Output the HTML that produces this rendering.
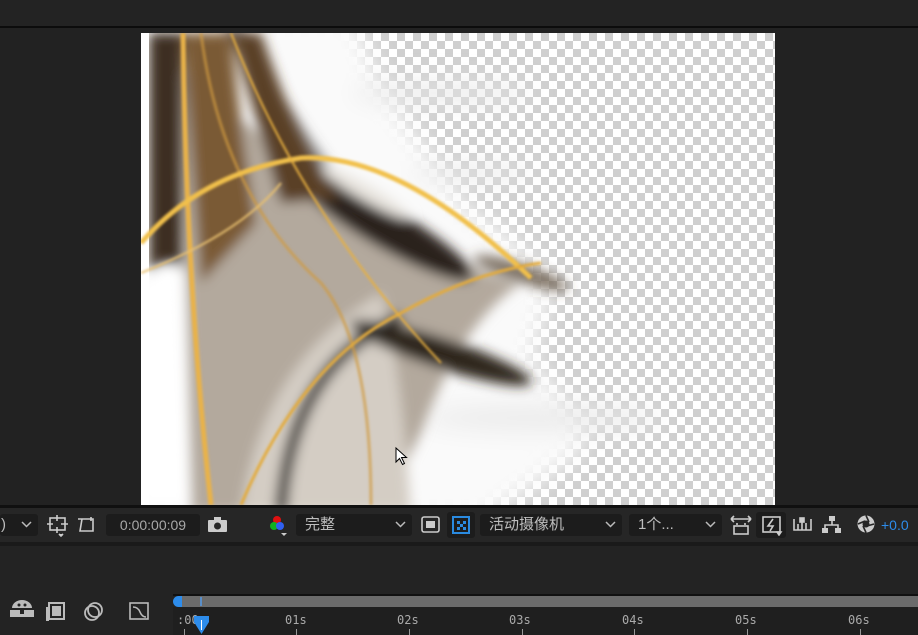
<!DOCTYPE html>
<html><head><meta charset="utf-8"><style>
body{margin:0;width:918px;height:635px;background:#222;overflow:hidden;position:relative;font-family:"Liberation Sans","Noto Sans CJK SC",sans-serif;}
.a{position:absolute}
.dd{position:absolute;background:#1c1c1c;border-radius:3px;height:22px;top:514px;color:#bdbdbd;font-size:15px;line-height:22px}
.ch{position:absolute;right:6px;top:7px}
.tk{position:absolute;color:#aaa;font-size:12px;font-family:"DejaVu Sans Mono","Liberation Mono",monospace;top:613px}
.tick{position:absolute;width:1px;height:6px;background:#999;top:629px}
</style></head><body>
<div class="a" style="left:0;top:0;width:918px;height:26px;background:#232323"></div>
<div class="a" style="left:0;top:26px;width:918px;height:2px;background:#0c0c0c"></div>

<svg class="a" style="left:141px;top:33px" width="634" height="472" viewBox="0 0 634 472">
<defs>
<pattern id="ck" width="16" height="16" patternUnits="userSpaceOnUse">
<rect width="16" height="16" fill="#fff"/><rect width="8" height="8" fill="#cfcfcf"/><rect x="8" y="8" width="8" height="8" fill="#cfcfcf"/></pattern>
<filter id="b1" x="-50%" y="-50%" width="200%" height="200%"><feGaussianBlur stdDeviation="12"/></filter>
<filter id="b2" x="-50%" y="-50%" width="200%" height="200%"><feGaussianBlur stdDeviation="6"/></filter>
<filter id="b3"><feGaussianBlur stdDeviation="1.2"/></filter>
</defs>
<rect width="634" height="472" fill="url(#ck)"/>
<g filter="url(#b1)">
<path d="M-20 -20 L215 -20 Q235 60 290 120 L320 170 Q400 220 410 260 L390 330 Q450 380 440 420 L340 490 L-20 490Z" fill="#fafafa"/>
<ellipse cx="300" cy="60" rx="90" ry="12" fill="#e6e6e6" opacity=".7"/>
<ellipse cx="400" cy="385" rx="120" ry="14" fill="#e8e8e8" opacity=".8"/>
<ellipse cx="330" cy="140" rx="60" ry="10" fill="#e6e6e6" opacity=".7"/>
</g>
<g filter="url(#b2)">
<path d="M40 40 Q140 120 250 190 Q330 240 380 250 Q320 290 280 400 L240 480 L50 480Z" fill="#b3a99d"/>
<path d="M100 480 Q120 330 240 260 Q260 330 270 480Z" fill="#d4cdc4"/>
<path d="M90 -10 Q150 100 200 160 L260 200 L300 230" stroke="#555" stroke-width="18" fill="none" opacity=".6"/>
<ellipse cx="245" cy="195" rx="100" ry="20" transform="rotate(30 245 195)" fill="#2a241e"/>
<ellipse cx="225" cy="160" rx="50" ry="8" transform="rotate(30 225 160)" fill="#e8e4de"/>
<ellipse cx="300" cy="320" rx="95" ry="15" transform="rotate(18 300 320)" fill="#2e261c"/>
<ellipse cx="380" cy="240" rx="50" ry="9" transform="rotate(18 380 240)" fill="#5a4a38" opacity=".8"/>
<path d="M140 480 Q150 330 260 285" stroke="#2a2520" stroke-width="12" fill="none"/>
<path d="M8 0 L42 0 L42 240 Q25 220 8 240Z" fill="#3c2e22"/>
<path d="M42 0 L90 0 Q100 100 115 190 L60 250Z" fill="#7a5a36"/>
<path d="M90 0 L120 0 Q160 120 200 165 L140 170Z" fill="#5a4028"/>
<path d="M0 250 L40 230 L50 472 L0 472Z" fill="#fff"/>
</g>
<rect x="0" y="0" width="8" height="472" fill="#fff"/>
<g fill="none" filter="url(#b3)">
<path d="M42 0 Q45 250 70 472" stroke="#e9b24a" stroke-width="5"/>
<path d="M60 0 Q80 160 180 250 Q230 310 230 472" stroke="#d09a40" stroke-width="3" opacity=".7"/>
<path d="M0 210 Q60 140 160 125 Q260 120 390 245" stroke="#f1c04c" stroke-width="5"/>
<path d="M100 472 Q160 330 260 280 Q330 240 400 230" stroke="#e3ab3c" stroke-width="3"/>
<path d="M90 0 Q160 180 300 330" stroke="#e8b040" stroke-width="2"/>
<path d="M0 240 Q100 200 140 150" stroke="#e8c070" stroke-width="2"/>
</g>
<path d="M255 415 l0 14 l3.5 -3.5 l3 6 l2 -1 l-3 -6 l5 0z" fill="#fff" stroke="#000" stroke-width="1"/>
</svg>

<!-- toolbar -->
<div class="a" style="left:0;top:505px;width:918px;height:3px;background:#101010"></div>
<div class="a" style="left:0;top:508px;width:918px;height:34px;background:#262626"></div>
<div class="a" style="left:0;top:542px;width:918px;height:4px;background:#1a1a1a"></div>
<div class="dd" style="left:0;width:38px"><span style="margin-left:1px">)</span><svg class="ch" width="11" height="7"><path d="M1 1l4.5 4.5L10 1" stroke="#bbb" stroke-width="1.5" fill="none"/></svg></div>
<svg class="a" style="left:47px;top:514px" width="60" height="24" fill="none" stroke="#ccc" stroke-width="1.6">
<rect x="3" y="4" width="15" height="12"/><path d="M10 1v6M10 13v6M0 10h6M14 10h7"/><path d="M12 20l2 2 2-2" fill="#ccc"/>
<path d="M33 17 L35 5 L46 5 L46 17Z M31 5h5M44 3v4"/>
</svg>
<div class="dd" style="left:106px;width:94px;text-align:center;font-size:14px;color:#a8a8a8">0:00:00:09</div>
<svg class="a" style="left:207px;top:516px" width="22" height="18"><rect x="1" y="4" width="19" height="12" rx="1" fill="#ccc"/><rect x="7" y="1" width="7" height="4" fill="#ccc"/><circle cx="10.5" cy="10" r="3.5" fill="#262626"/></svg>
<svg class="a" style="left:268px;top:514px" width="22" height="24"><circle cx="9" cy="6" r="4" fill="#e01010"/><circle cx="6" cy="12" r="4" fill="#10b020"/><circle cx="12" cy="12" r="4" fill="#3060f0"/><path d="M13 19h6l-3 3z" fill="#ccc"/></svg>
<div class="dd" style="left:296px;width:116px"><span style="margin-left:9px">完整</span><svg class="ch" width="11" height="7"><path d="M1 1l4.5 4.5L10 1" stroke="#bbb" stroke-width="1.5" fill="none"/></svg></div>
<svg class="a" style="left:421px;top:516px" width="20" height="18"><rect x="1" y="1" width="17" height="15" rx="2" fill="none" stroke="#ccc" stroke-width="1.6"/><rect x="5" y="5" width="9" height="7" fill="#ccc"/></svg>
<div class="a" style="left:447px;top:512px;width:28px;height:26px;background:#1c1c1c;border-radius:3px"></div>
<svg class="a" style="left:452px;top:516px" width="19" height="18"><rect x="1" y="1" width="16" height="16" fill="none" stroke="#2a8ae0" stroke-width="2"/><path d="M5 5h3v3H5zM11 5h3v3h-3zM8 8h3v3H8zM5 11h3v3H5zM11 11h3v3h-3z" fill="#2a8ae0"/></svg>
<div class="dd" style="left:480px;width:142px"><span style="margin-left:9px">活动摄像机</span><svg class="ch" width="11" height="7"><path d="M1 1l4.5 4.5L10 1" stroke="#bbb" stroke-width="1.5" fill="none"/></svg></div>
<div class="dd" style="left:629px;width:93px"><span style="margin-left:9px">1个...</span><svg class="ch" width="11" height="7"><path d="M1 1l4.5 4.5L10 1" stroke="#bbb" stroke-width="1.5" fill="none"/></svg></div>
<svg class="a" style="left:729px;top:514px" width="24" height="22" fill="none" stroke="#ccc" stroke-width="1.6"><path d="M2 5h20M2 5l3-3M2 5l3 3M22 5l-3-3M22 5l-3 3"/><path d="M8 9v2M16 9v2"/><rect x="5" y="12" width="14" height="8"/></svg>
<div class="a" style="left:756px;top:512px;width:30px;height:26px;background:#1c1c1c;border-radius:3px"></div>
<svg class="a" style="left:761px;top:515px" width="22" height="21" fill="none" stroke="#ccc" stroke-width="1.6"><rect x="2" y="2" width="17" height="15"/><path d="M12 4l-5 7h5l-3 5" /><path d="M16 17h4l-2 3z" fill="#ccc"/></svg>
<svg class="a" style="left:792px;top:515px" width="22" height="18" fill="none" stroke="#ccc" stroke-width="1.6"><path d="M2 4v11h17V4M6 15V9M10 15V4M14 15V8"/><rect x="8" y="3" width="4" height="4" fill="#ccc"/></svg>
<svg class="a" style="left:821px;top:515px" width="22" height="20" fill="#ccc"><rect x="8" y="1" width="6" height="5"/><rect x="1" y="13" width="6" height="5"/><rect x="14" y="13" width="6" height="5"/><path d="M11 6v4M4 13v-3h13v3" stroke="#ccc" stroke-width="1.6" fill="none"/></svg>
<svg class="a" style="left:856px;top:514px" width="20" height="20"><circle cx="10" cy="10" r="8.5" fill="#ccc"/><circle cx="10" cy="10" r="3.5" fill="#262626"/><path d="M10 1.5 L13 8 M18 10 L11 12 M10 18.5 L7 12 M2 10 L9 7" stroke="#262626" stroke-width="1.6"/></svg>
<div class="a" style="left:881px;top:517px;color:#2d8ceb;font-size:14px">+0.0</div>

<!-- lower panel -->
<div class="a" style="left:0;top:546px;width:918px;height:89px;background:#232323"></div>
<svg class="a" style="left:6px;top:598px" width="150" height="26" fill="#bbb">
<path d="M4 12h24v7H4z"/><path d="M6 10a10 8 0 0 1 20 0z"/><circle cx="13" cy="7" r="1.5" fill="#232323"/><circle cx="19" cy="7" r="1.5" fill="#232323"/><rect x="14" y="10" width="4" height="6" fill="#232323"/>
<rect x="43" y="5" width="15" height="16" fill="none" stroke="#bbb" stroke-width="2"/><rect x="40" y="9" width="3" height="14"/><path d="M46 8h9v10h-9z" fill="#bbb"/>
<circle cx="89" cy="12" r="7" fill="none" stroke="#bbb" stroke-width="1.8"/><circle cx="86" cy="15" r="7" fill="none" stroke="#bbb" stroke-width="1.8"/>
<rect x="124" y="5" width="18" height="16" fill="none" stroke="#bbb" stroke-width="1.6"/><path d="M127 9 q5 0 7 5 q2 5 6 5" fill="none" stroke="#bbb" stroke-width="1.6"/>
</svg>
<div class="a" style="left:173px;top:594px;width:745px;height:2px;background:#111"></div>
<div class="a" style="left:180px;top:596px;width:738px;height:11px;background:#6b6b6b"></div>
<div class="a" style="left:173px;top:596px;width:9px;height:11px;background:#2d8ceb;border-radius:6px 0 0 6px"></div>
<div class="a" style="left:200px;top:597px;width:2px;height:9px;background:#5a8ec8"></div>
<div class="a" style="left:173px;top:607px;width:745px;height:28px;background:#1f1f1f"></div>
<div class="tk" style="left:177px">:00</div>
<div class="tk" style="left:285px">01s</div>
<div class="tk" style="left:397px">02s</div>
<div class="tk" style="left:509px">03s</div>
<div class="tk" style="left:622px">04s</div>
<div class="tk" style="left:735px">05s</div>
<div class="tk" style="left:848px">06s</div>
<div class="tick" style="left:184px"></div><div class="tick" style="left:296px"></div><div class="tick" style="left:409px"></div><div class="tick" style="left:522px"></div><div class="tick" style="left:634px"></div><div class="tick" style="left:747px"></div><div class="tick" style="left:860px"></div>
<svg class="a" style="left:193px;top:615px" width="17" height="20"><path d="M1 1h15v6l-7.5 12L1 7z" fill="#2d8ceb"/><path d="M8.5 5v10" stroke="#fff" stroke-width="1"/></svg>
</body></html>
